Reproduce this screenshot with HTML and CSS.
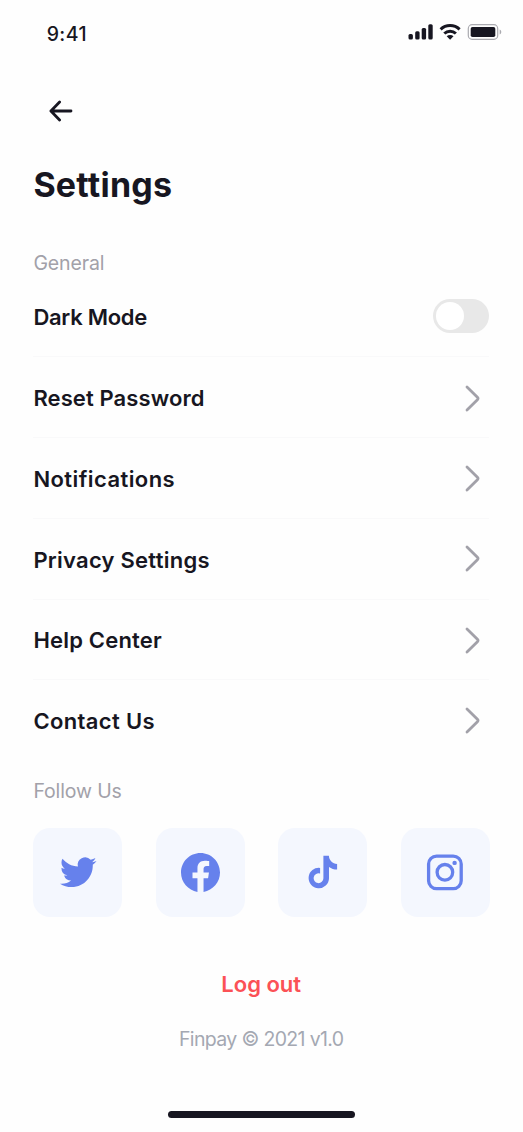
FILE: index.html
```html
<!DOCTYPE html>
<html lang="en">
<head>
<meta charset="utf-8">
<title>Settings</title>
<link rel="stylesheet" href="styles.css">
</head>
<body>
<main class="screen">
  <header class="status">
    <span class="time">9:41</span>
    <svg class="indicators" viewBox="408 22 96 20" fill="#171621">
      <rect x="408.5" y="34" width="4.4" height="5.6" rx="1.5"/>
      <rect x="415.2" y="31.2" width="4.4" height="8.4" rx="1.5"/>
      <rect x="421.7" y="28" width="4.4" height="11.6" rx="1.5"/>
      <rect x="428.3" y="24.3" width="4.4" height="15.3" rx="1.5"/>
      <g fill="none" stroke="#171621" stroke-width="3">
        <path d="M440.6 29.3a13.8 13.8 0 0 1 19 0"/>
        <path d="M444.3 33.5a8.4 8.4 0 0 1 11.6 0"/>
      </g>
      <path d="M446.7 36.3a4.8 4.8 0 0 1 6.800 0l-3.400 3.400z"/>
      <rect x="468.3" y="24.7" width="29.4" height="14.6" rx="3.8" fill="none" stroke="#aaaab0" stroke-width="1.2"/>
      <rect x="470.7" y="26.9" width="24.6" height="10.2" rx="1.8"/>
      <path d="M499.7 29.5v5c2.1-.9 2.1-4.1 0-5z" fill="#aaaab0"/>
    </svg>
  </header>
  <nav class="nav">
    <svg class="back" viewBox="0 0 24 22"><path d="M22 11H2M10.6 2L1.9 11l8.7 9"/></svg>
  </nav>
  <h1 class="title">Settings</h1>
  <h2 class="section general">General</h2>
  <ul class="list">
    <li class="row"><span class="label dark-mode">Dark Mode</span><span class="switch"><span class="knob"></span></span></li>
    <li class="row"><span class="label reset">Reset Password</span><svg class="chevron" viewBox="0 0 16 27"><path d="M2 2l10.4 10.2q1.2 1.3 0 2.6L2 25"/></svg></li>
    <li class="row"><span class="label notifications">Notifications</span><svg class="chevron" viewBox="0 0 16 27"><path d="M2 2l10.4 10.2q1.2 1.3 0 2.6L2 25"/></svg></li>
    <li class="row raised"><span class="label privacy">Privacy Settings</span><svg class="chevron" viewBox="0 0 16 27"><path d="M2 2l10.4 10.2q1.2 1.3 0 2.6L2 25"/></svg></li>
    <li class="row"><span class="label help">Help Center</span><svg class="chevron" viewBox="0 0 16 27"><path d="M2 2l10.4 10.2q1.2 1.3 0 2.6L2 25"/></svg></li>
    <li class="row"><span class="label contact">Contact Us</span><svg class="chevron" viewBox="0 0 16 27"><path d="M2 2l10.4 10.2q1.2 1.3 0 2.6L2 25"/></svg></li>
  </ul>
  <h2 class="section follow">Follow Us</h2>
  <div class="socials">
    <a class="tile"><svg class="twitter" viewBox="0 0 24 24"><path d="M23.953 4.57a10 10 0 0 1-2.825.775 4.958 4.958 0 0 0 2.163-2.723c-.951.555-2.005.959-3.127 1.184a4.92 4.92 0 0 0-8.384 4.482C7.69 8.095 4.067 6.13 1.64 3.162a4.822 4.822 0 0 0-.666 2.475c0 1.71.87 3.213 2.188 4.096a4.904 4.904 0 0 1-2.228-.616v.06a4.923 4.923 0 0 0 3.946 4.827 4.996 4.996 0 0 1-2.212.085 4.936 4.936 0 0 0 4.604 3.417 9.867 9.867 0 0 1-6.102 2.105c-.39 0-.779-.023-1.17-.067a13.995 13.995 0 0 0 7.557 2.209c9.053 0 13.998-7.496 13.998-13.985 0-.21 0-.42-.015-.63A9.935 9.935 0 0 0 24 4.59z"/></svg></a>
    <a class="tile"><svg class="facebook" viewBox="0 0 24 24"><path d="M24 12.073c0-6.627-5.373-12-12-12s-12 5.373-12 12c0 5.99 4.388 10.954 10.125 11.854v-8.385H7.078v-3.47h3.047V9.43c0-3.007 1.792-4.669 4.533-4.669 1.312 0 2.686.235 2.686.235v2.953H15.83c-1.491 0-1.956.925-1.956 1.874v2.25h3.328l-.532 3.47h-2.796v8.385C19.612 23.027 24 18.062 24 12.073z"/></svg></a>
    <a class="tile"><svg class="glyph" viewBox="303 852.5 40 40"><path d="M323.4 856.2h5.5c.2 4.6 3.7 8 8.2 8.2v5.6c-3.1 0-5.8-.9-8.1-2.6v11.300a10.200 10.200 0 1 1-8.900-10.300v5.700a4.900 4.900 0 1 0 3.300 4.600z"/></svg></a>
    <a class="tile"><svg class="glyph" viewBox="425.5 852.5 40 40"><g fill="none" stroke="#6681ec" stroke-width="3.3"><rect x="429.1" y="856.6" width="32.6" height="32.6" rx="8"/><circle cx="445.4" cy="872.8" r="7.800"/></g><circle cx="455.1" cy="863.4" r="2.2"/></svg></a>
  </div>
  <button class="logout">Log out</button>
  <p class="version">Finpay © 2021 v1.0</p>
  <div class="home-bar"></div>
</main>
</body>
</html>
```

FILE: styles.css
```css
* { box-sizing: border-box; }
body { margin: 0; background: #fefefe; color: #171621; font-family: Inter, "Liberation Sans", sans-serif; font-feature-settings: "calt" 0, "liga" 0; }
.screen { display: flex; flex-direction: column; width: 523px; height: 1132px; padding: 0 34px 0 33.400px; overflow: hidden; }
.status { display: flex; justify-content: space-between; align-items: flex-start; height: 96px; padding: 22px 0 0 13.300px; margin-right: -15px; }
.time { font-size: 19.5px; line-height: 24px; font-weight: 500; letter-spacing: .4px; }
.indicators { width: 96px; height: 20px; }
.nav { height: 64px; padding: 4px 0 0 15.600px; }
.back { display: block; width: 24px; height: 22px; fill: none; stroke: #171621; stroke-width: 2.8; stroke-linecap: round; stroke-linejoin: round; }
.title { margin: 0; height: 91px; padding-top: .6px; font-size: 34px; line-height: 48px; font-weight: 700; letter-spacing: .22px; white-space: nowrap; }
.section { margin: 0; font-size: 19.5px; line-height: 24px; font-weight: 400; color: #a2a1a9; letter-spacing: -.12px; }
.general { height: 25.5px; }
.list { margin: 0; padding: 0; list-style: none; }
.row { display: flex; justify-content: space-between; align-items: center; height: 80.75px; border-bottom: 1.5px solid #f9f9fa; }
.row:last-child { border-bottom: 0; padding-bottom: 1.5px; }
.label { font-size: 22px; line-height: 32px; font-weight: 600; white-space: nowrap; padding-top: 2px; }
.dark-mode { letter-spacing: -.28px; }
.reset { letter-spacing: .1px; }
.notifications { letter-spacing: .42px; }
.privacy { letter-spacing: .25px; }
.help { letter-spacing: .2px; }
.contact { letter-spacing: .35px; }
.switch { display: flex; align-items: center; width: 56px; height: 34px; padding: 3px; border-radius: 17px; background: #e8e8e8; }
.knob { width: 28px; height: 28px; border-radius: 50%; background: #fff; }
.chevron { width: 16px; height: 27px; margin: 2px 8.500px 0 0; fill: none; stroke: #a2a1a9; stroke-width: 2.8; stroke-linecap: round; }
.raised .chevron { margin-top: 0; }
.follow { height: 67px; margin-top: -.5px; padding-top: 18px; }
.socials { display: flex; gap: 33.5px; margin-right: -1px; }
.tile { display: flex; align-items: center; justify-content: center; flex: none; width: 89px; height: 89px; border-radius: 17px; background: #f4f7fe; fill: #6681ec; }
.twitter { width: 36.5px; height: 36.5px; margin: 1px 0 0 1px; }
.facebook { width: 39px; height: 39px; }
.glyph { width: 40px; height: 40px; }
.logout { align-self: center; margin-top: 51px; padding: 0; border: 0; background: none; font: 600 22px/32px Inter, "Liberation Sans", sans-serif; color: #fb5156; }
.version { margin: 26px 0 0; text-align: center; font-size: 19.5px; line-height: 26px; letter-spacing: -.65px; color: #a4a8b2; }
.home-bar { align-self: center; width: 187px; height: 7px; margin-top: 59px; border-radius: 4px; background: #171621; }
```
